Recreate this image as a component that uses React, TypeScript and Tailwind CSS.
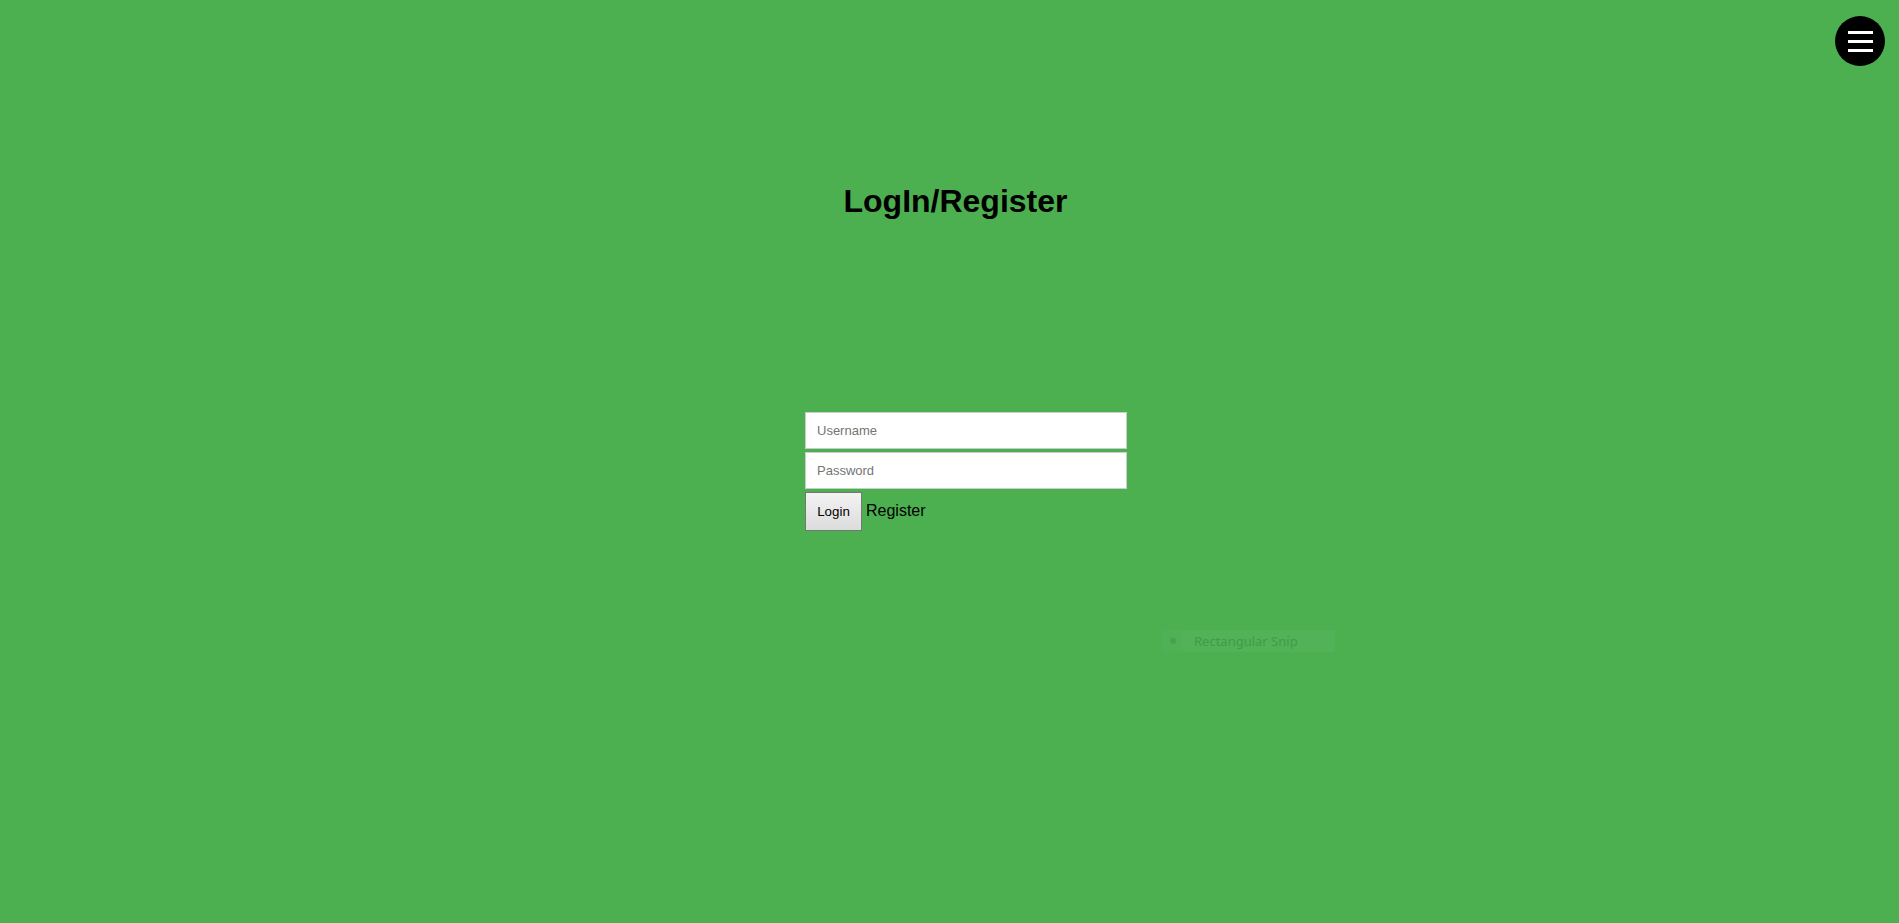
import React from "react";

function MenuButton() {
  return (
    <button className="absolute top-[16px] right-[14px] w-[50px] h-[50px] rounded-full bg-black flex flex-col items-center justify-center gap-[6px]">
      <span className="block w-[25px] h-[3px] bg-white"></span>
      <span className="block w-[25px] h-[3px] bg-white"></span>
      <span className="block w-[25px] h-[3px] bg-white"></span>
    </button>
  );
}

function SnipHint() {
  return (
    <div className="absolute left-[1162px] top-[630px] w-[173px] h-[22px] flex items-center bg-[#52b258] font-['Noto_Sans',sans-serif]">
      <div className="w-[21px] h-full flex items-center justify-center bg-[#50b056]">
        <span className="block w-[6px] h-[6px] rounded-full bg-[#46a24c]"></span>
      </div>
      <span className="ml-[11px] text-[13px] leading-none text-[#3f9c45]">
        Rectangular Snip
      </span>
    </div>
  );
}

export default function App() {
  return (
    <div className="relative min-h-[923px] bg-[#4caf50] overflow-hidden font-['Liberation_Sans',Arial,sans-serif] text-black">
      <MenuButton />

      <h1 className="pt-[183px] pl-[12px] text-center text-[32px] leading-[37px] font-bold">
        LogIn/Register
      </h1>

      <form
        className="mt-[192px] ml-[805px] w-[322px] flex flex-col gap-[3px]"
        onSubmit={(e) => e.preventDefault()}
      >
        <input
          type="text"
          placeholder="Username"
          className="w-full h-[37px] px-[11px] bg-white border border-[#cccccc] text-[13px] placeholder:text-[#757575] outline-none"
        />
        <input
          type="password"
          placeholder="Password"
          className="w-full h-[37px] px-[11px] bg-white border border-[#cccccc] text-[13px] placeholder:text-[#757575] outline-none"
        />
        <div className="flex items-baseline gap-[4px]">
          <button
            type="submit"
            className="w-[57px] h-[39px] border border-[#767676] bg-gradient-to-b from-[#f3f3f3] to-[#dcdcdc] text-[13.33px]"
          >
            Login
          </button>
          <span className="text-[16px]">Register</span>
        </div>
      </form>

      <SnipHint />
    </div>
  );
}
